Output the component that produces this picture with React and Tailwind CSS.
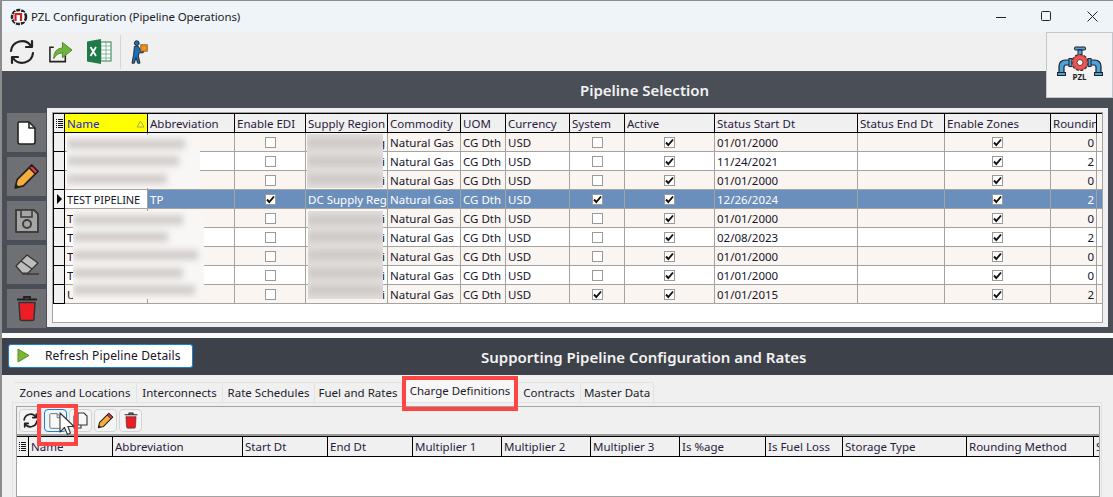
import React from "react";

const topCols = [
  ["Name", 83], ["Abbreviation", 87], ["Enable EDI", 71], ["Supply Region", 82], ["Commodity", 73], ["UOM", 45],
  ["Currency", 64], ["System", 55], ["Active", 90], ["Status Start Dt", 143], ["Status End Dt", 87], ["Enable Zones", 106], ["Roundin", 46],
];
const rows = [
  { n: "", tail: "g", sys: false, date: "01/01/2000", r: 0 },
  { n: "", tail: "i", sys: false, date: "11/24/2021", r: 2 },
  { n: "", tail: "i", sys: false, date: "01/01/2000", r: 0 },
  { n: "TEST PIPELINE", a: "TP", edi: true, reg: "DC Supply Reg", sys: true, date: "12/26/2024", r: 2, sel: true },
  { n: "T", tail: "i", sys: false, date: "01/01/2000", r: 0 },
  { n: "T", tail: "i", sys: false, date: "02/08/2023", r: 2 },
  { n: "T", tail: "i", sys: false, date: "01/01/2000", r: 0 },
  { n: "T", tail: "i", sys: false, date: "01/01/2000", r: 0 },
  { n: "U", tail: "i", sys: true, date: "01/01/2015", r: 2 },
];
const lowCols = [
  ["Name", 84], ["Abbreviation", 130], ["Start Dt", 85], ["End Dt", 85], ["Multiplier 1", 89], ["Multiplier 2", 89],
  ["Multiplier 3", 89], ["Is %age", 86], ["Is Fuel Loss", 77], ["Storage Type", 124], ["Rounding Method", 127], ["S", 8],
];

function Check({ on }) {
  return (
    <span className="flex h-[11px] w-[11px] items-center justify-center border border-[#9a9a9a] bg-white">
      {on && (
        <svg width="9" height="9" viewBox="0 0 9 9">
          <path d="M1 4.5 L3.3 7 L8 1.5" fill="none" stroke="#111" strokeWidth="1.9" />
        </svg>
      )}
    </span>
  );
}

function Cell({ w, children, className = "" }) {
  return (
    <div style={{ width: w }} className={`flex h-full shrink-0 items-center overflow-hidden whitespace-nowrap border-r border-[#a3a3a3] px-[2px] pt-px ${className}`}>
      {children}
    </div>
  );
}

function Row({ row, i }) {
  const bg = row.sel ? "bg-[#6a8fbc] text-white" : i % 2 === 0 ? "bg-[#fbf5f2] text-[#15152a]" : "bg-white text-[#15152a]";
  return (
    <div className={`flex h-[19px] border-b border-[#a3a3a3] ${bg}`}>
      <div className="flex h-[19px] w-[12px] shrink-0 items-center justify-center border-x border-b border-black bg-[#f0f0f0]">
        {row.sel && <span className="h-0 w-0 border-y-[5px] border-l-[5px] border-y-transparent border-l-black" />}
      </div>
      <Cell w={83} className={row.sel ? "bg-white text-[11px] tracking-[-0.1px] text-[#15152a]" : ""}>{row.n}</Cell>
      <Cell w={87}>{row.a}</Cell>
      <Cell w={71} className="justify-center"><Check on={row.edi} /></Cell>
      <Cell w={82} className={row.sel ? "" : "justify-end"}>{row.reg || row.tail}</Cell>
      <Cell w={73}>Natural Gas</Cell>
      <Cell w={45}>CG Dth</Cell>
      <Cell w={64}>USD</Cell>
      <Cell w={55} className="justify-center"><Check on={row.sys} /></Cell>
      <Cell w={90} className="justify-center"><Check on /></Cell>
      <Cell w={143}>{row.date}</Cell>
      <Cell w={87} />
      <Cell w={106} className="justify-center"><Check on /></Cell>
      <Cell w={46} className="justify-end">{row.r}</Cell>
    </div>
  );
}

function HeaderCell({ w, children, className = "" }) {
  return (
    <div style={{ width: w }} className={`flex h-full shrink-0 items-center overflow-hidden whitespace-nowrap border-r border-black px-[2px] pt-px text-[#2a1a3c] ${className}`}>
      {children}
    </div>
  );
}

function GridGlyph() {
  return (
    <svg width="7" height="11" viewBox="0 0 7 11">
      <path d="M0 1.5h1M2 1.5h5M0 3.5h1M2 3.5h5M0 5.5h1M2 5.5h5M0 7.5h1M2 7.5h5M0 9.5h1M2 9.5h5" stroke="#111" strokeWidth="1" />
    </svg>
  );
}

function SideBtn({ children }) {
  return <div className="flex h-[39px] w-[39px] items-center justify-center bg-[#6e7074]">{children}</div>;
}

function Sync({ size = 26, sw = 2.2 }) {
  return (
    <svg width={size} height={size} viewBox="0 0 26 26" fill="none" stroke="#222" strokeWidth={sw} strokeLinecap="round" strokeLinejoin="round">
      <path d="M2 12 A11 11 0 0 1 22 7" />
      <path d="M23 2 V8 H17" />
      <path d="M24 14 A11 11 0 0 1 4 19" />
      <path d="M3 24 V18 H9" />
    </svg>
  );
}

function PageIcon({ w = 19, h = 24, stroke = "#222", fill = "white", sw = 1.6 }) {
  return (
    <svg width={w} height={h} viewBox="0 0 19 24">
      <path d="M2 1 H12 L18 7 V21 a2 2 0 0 1 -2 2 H3 a2 2 0 0 1 -2 -2 V2 Z" fill={fill} stroke={stroke} strokeWidth={sw} strokeLinejoin="round" />
      <path d="M12 1 V7 H18" fill="none" stroke={stroke} strokeWidth={sw} strokeLinejoin="round" />
    </svg>
  );
}

function Pencil({ size = 26 }) {
  return (
    <svg width={size} height={size} viewBox="0 0 26 26">
      <path d="M2 24 L4 16 L18 2 L24 8 L10 22 Z" fill="#f6ad3c" stroke="#222" strokeWidth="1.6" strokeLinejoin="round" />
      <path d="M18 2 L24 8 L21.5 10.5 L15.5 4.5 Z" fill="#e8364b" stroke="#222" strokeWidth="1.4" strokeLinejoin="round" />
      <path d="M2 24 L3 20 L6 23 Z" fill="#222" />
    </svg>
  );
}

function Trash({ w = 22, h = 26, sw = 1.5 }) {
  return (
    <svg width={w} height={h} viewBox="0 0 22 26">
      <path d="M1 4 H21 M8 3 V1.5 H14 V3" fill="none" stroke="#222" strokeWidth="1.8" />
      <path d="M3 7 H19 L18 23 a2 2 0 0 1 -2 2 H6 a2 2 0 0 1 -2 -2 Z" fill="#ee1c25" stroke="#333" strokeWidth={sw} strokeLinejoin="round" />
    </svg>
  );
}

function PipeLogo() {
  const blue = "#4aa3dc";
  const ink = "#222";
  return (
    <svg width="46" height="34" viewBox="0 0 46 34">
      <rect x="17.5" y="1" width="11" height="3" rx="1" fill={blue} stroke={ink} strokeWidth="1" />
      <rect x="21" y="4" width="4" height="6" fill={blue} stroke={ink} strokeWidth="1" />
      <path d="M14 14 H8 a6 6 0 0 0 -6 6 V29 H7 V21 a2 2 0 0 1 2 -2 H14 Z" fill={blue} stroke={ink} strokeWidth="1.2" />
      <path d="M32 14 H38 a6 6 0 0 1 6 6 V29 H39 V21 a2 2 0 0 0 -2 -2 H32 Z" fill={blue} stroke={ink} strokeWidth="1.2" />
      <rect x="0.5" y="26.5" width="8" height="3" fill={blue} stroke={ink} strokeWidth="1" />
      <rect x="37.5" y="26.5" width="8" height="3" fill={blue} stroke={ink} strokeWidth="1" />
      <rect x="12" y="12.5" width="3" height="8" fill={blue} stroke={ink} strokeWidth="1" />
      <rect x="31" y="12.5" width="3" height="8" fill={blue} stroke={ink} strokeWidth="1" />
      <circle cx="23" cy="16.5" r="8" fill="#e04f4f" stroke="#333" strokeWidth="1.2" strokeDasharray="3 1.6" />
      <circle cx="23" cy="16.5" r="6" fill="#e85858" />
      <circle cx="23" cy="16.5" r="3" fill="#fff" stroke="#7a2b2b" strokeWidth="1" />
    </svg>
  );
}

function Blur({ className, bars, bar }) {
  return (
    <div className={`absolute overflow-hidden ${className}`}>
      <div className="flex h-full flex-col justify-around blur-[3px]">
        {bars.map((w, i) => (
          <div key={i} style={{ width: w }} className={`h-[10px] ${bar}`} />
        ))}
      </div>
    </div>
  );
}

function ToolBtn({ children, active }) {
  return (
    <div className={`flex h-[23px] w-[23px] shrink-0 items-center justify-center rounded-[4px] border ${active ? "border-[#1a7fd6] bg-[#eef5fb]" : "border-[#d4d4d4] bg-[#f4f4f4]"}`}>
      {children}
    </div>
  );
}

export default function App() {
  return (
    <div className="flex h-[497px] w-[1113px] flex-col overflow-hidden border-l-2 border-t border-[#8c8c8c] bg-[#f0f0f0] text-[11.5px] leading-none text-[#15152a] [font-family:'Noto_Sans',sans-serif]">
      {/* Title bar */}
      <div className="flex h-[31px] shrink-0 items-center bg-[#eff4f9] pl-[8px]">
        <svg width="18" height="18" viewBox="0 0 18 18">
          <circle cx="9" cy="9" r="7" fill="none" stroke="#222" strokeWidth="2.5" strokeDasharray="4 1" />
          <rect x="4" y="4" width="10" height="10" rx="1" fill="#fff" />
          <path d="M5.5 13 V6 H11 V13" fill="none" stroke="#d32027" strokeWidth="2.2" />
        </svg>
        <span className="ml-[3px] text-[11.5px] tracking-[-0.1px] text-[#1c1c24]">PZL Configuration (Pipeline Operations)</span>
        <svg className="ml-auto mr-[15px]" width="102" height="14" viewBox="0 0 102 14" fill="none" stroke="#222" strokeWidth="1">
          <path d="M0 7.5 H10" />
          <rect x="45.5" y="1.5" width="9" height="9" rx="1" />
          <path d="M91.5 1.5 L101.5 11.5 M101.5 1.5 L91.5 11.5" />
        </svg>
      </div>

      {/* Toolbar */}
      <div className="relative flex h-[39px] shrink-0 items-center bg-[#f0f0f0] pl-[7px]">
        <Sync />
        <svg className="ml-[13px]" width="25" height="24" viewBox="0 0 26 24">
          <path d="M6 7 H2 V22 H18 V14" fill="none" stroke="#222" strokeWidth="1.6" />
          <path d="M6 19 C6 11 10 8 15 8 V2 L25 10 L15 18 V13 C11 13 8 15 6 19 Z" fill="#6fb33f" stroke="#4b8a26" strokeWidth="1" />
        </svg>
        <svg className="ml-[14px]" width="25" height="25" viewBox="0 0 25 25">
          <rect x="9" y="3" width="15" height="19" fill="#fff" stroke="#2a7d4d" strokeWidth="1" />
          <path d="M14 3V22M19 3V22M9 7H24M9 11H24M9 15H24M9 19H24" stroke="#6aa585" strokeWidth="0.8" />
          <path d="M0 2.5 L14 0 V25 L0 22.5 Z" fill="#1f7a47" />
          <path d="M3.5 8 L9 17 M9 8 L3.5 17" stroke="#fff" strokeWidth="1.8" />
        </svg>
        <span className="ml-[8px] h-[34px] w-px bg-[#d5d5d5]" />
        <svg className="ml-[10px]" width="18" height="24" viewBox="0 0 20 30">
          <circle cx="6" cy="4" r="3" fill="#1e6fb5" stroke="#111" strokeWidth="1" />
          <path d="M3 8 H8 L11 13 H14 V16 H9 L8 20 L10 29 H7 L5 22 L3 29 H0 L2 18 Z" fill="#1e6fb5" stroke="#111" strokeWidth="1" />
          <rect x="11" y="6" width="8" height="8" fill="#f09022" stroke="#7a4a10" strokeWidth="1" />
        </svg>
        <div className="absolute right-0 top-0 flex h-[66px] w-[67px] flex-col items-center justify-center border border-[#c3c7cb] bg-[#f3f3f3] pb-[4px]">
          <div className="relative h-[34px] w-[46px]">
            <PipeLogo />
            <span className="absolute inset-x-0 bottom-[-1px] text-center text-[8px] font-bold text-[#222]">PZL</span>
          </div>
        </div>
      </div>

      {/* Pipeline Selection */}
      <div className="flex h-[262px] shrink-0 flex-col bg-[#4a4f57]">
        <div className="flex h-[37px] shrink-0 items-center justify-center pl-[174px] pt-[2px] text-[15px] font-semibold text-[#f2f2f2]">
          Pipeline Selection
        </div>
        <div className="flex min-h-0 flex-1">
          <div className="ml-[5px] mt-[5px] flex w-[40px] flex-col gap-[5px]">
            <SideBtn><PageIcon w={19} h={26} /></SideBtn>
            <SideBtn><Pencil size={27} /></SideBtn>
            <SideBtn>
              <svg width="26" height="26" viewBox="0 0 26 26">
                <path d="M2 2 H20 L24 6 V24 H2 Z" fill="#a5a5a5" stroke="#3e3e3e" strokeWidth="2" strokeLinejoin="round" />
                <rect x="7" y="2" width="11" height="7" fill="#a5a5a5" stroke="#3e3e3e" strokeWidth="1.6" />
                <circle cx="13" cy="16" r="4" fill="none" stroke="#3e3e3e" strokeWidth="2" />
              </svg>
            </SideBtn>
            <SideBtn>
              <svg width="26" height="24" viewBox="0 0 26 24">
                <path d="M2 13 L13 2 L24 10 L14 20 H8 Z" fill="#bdbdbd" stroke="#333" strokeWidth="1.2" strokeLinejoin="round" />
                <path d="M7 8 L18 16" stroke="#333" strokeWidth="1.2" />
                <path d="M8 21 H25" stroke="#333" strokeWidth="1.4" />
              </svg>
            </SideBtn>
            <SideBtn><Trash w={22} h={27} sw={1.5} /></SideBtn>
          </div>

          {/* Grid panel */}
          <div className="flex h-[219px] w-[1061px] shrink-0 flex-col bg-[#f0f0f0] px-[5px] pt-[4px]">
            <div className="relative h-[211px] border border-[#a3a3a3] bg-white">
              <div className="flex h-[20px] border-y border-black bg-[#f0f0f0]">
                <div className="flex h-full w-[12px] shrink-0 items-center justify-center border-x border-black"><GridGlyph /></div>
                {topCols.map(([t, w], i) => (
                  <HeaderCell key={t} w={w} className={i === 0 ? "justify-between bg-[#ffff00] !text-[#2222dd]" : ""}>
                    {t}
                    {i === 0 && (
                      <svg width="9" height="8" viewBox="0 0 9 8"><path d="M4.5 1 L8 7 H1 Z" fill="none" stroke="#a8a860" /></svg>
                    )}
                  </HeaderCell>
                ))}
              </div>
              {rows.map((r, i) => <Row key={i} row={r} i={i} />)}
              {/* Redacted (blurred) areas */}
              <Blur className="left-[14px] top-[22px] h-[53px] w-[133px] bg-[#f8f7f6]" bars={[118, 112, 100]} bar="bg-[#d2cdca]" />
              <Blur className="left-[20px] top-[98px] h-[88px] w-[131px] bg-[#f8f7f6]" bars={[110, 95, 125, 110, 122]} bar="bg-[#d2cdca]" />
              <Blur className="left-[254px] top-[21px] h-[54px] w-[76px] bg-[#e2dfdd]" bars={[76, 76, 76]} bar="bg-[#cec9c7]" />
              <Blur className="left-[255px] top-[98px] h-[88px] w-[75px] bg-[#e2dfdd]" bars={[75, 75, 75, 75, 75]} bar="bg-[#cec9c7]" />
            </div>
          </div>
        </div>
      </div>

      <div className="h-[5px] shrink-0 bg-[#fafafa]" />

      {/* Lower header */}
      <div className="flex h-[37px] shrink-0 items-center bg-[#3d4149]">
        <div className="-mt-[2px] ml-[6px] flex h-[24px] w-[185px] items-center rounded-[3px] border border-[#1a7fd6] bg-white pl-[8px]">
          <svg width="13" height="15" viewBox="0 0 13 15"><path d="M1 1 L12 7.5 L1 14 Z" fill="#7ab833" stroke="#5a8f26" strokeWidth="1" /></svg>
          <span className="ml-[15px] text-[12px] tracking-[0.12px] text-[#15152a]">Refresh Pipeline Details</span>
        </div>
        <div className="ml-[288px] pt-[2px] text-[15px] font-semibold text-[#f2f2f2]">Supporting Pipeline Configuration and Rates</div>
      </div>

      {/* Lower panel */}
      <div className="relative mx-[5px] flex min-h-0 w-[1102px] flex-1 flex-col bg-[#f0f0f0] pl-[5px] pr-[7px] pt-[7px]">
        <div className="flex h-[20px] shrink-0 items-stretch pl-[2px] text-[#1c1c2a]">
          {[
            ["Zones and Locations", 123], ["Interconnects", 86], ["Rate Schedules", 92], ["Fuel and Rates", 87],
            ["Charge Definitions", 116], ["Contracts", 63], ["Master Data", 73],
          ].map(([t, w]) => (
            t === "Charge Definitions" ? (
              <div key={t} style={{ width: w }} className="-mt-[3px] flex h-[23px] shrink-0 items-center justify-center bg-[#f7f7f7]">{t}</div>
            ) : (
              <div key={t} style={{ width: w }} className="flex shrink-0 items-center justify-center border-r border-t border-[#e3e3e3]">{t}</div>
            )
          ))}
        </div>
        <div className="flex min-h-0 flex-1 flex-col border-x border-t border-[#e3e3e3] pl-[3px] pr-[1px] pt-[3px]">
          <div className="flex min-h-0 flex-1 flex-col overflow-hidden border-x border-t border-[#a3a3a3]">
            <div className="flex h-[27px] shrink-0 items-center gap-[2px] pl-[2px]">
              <ToolBtn><Sync size={15} sw={3} /></ToolBtn>
              <ToolBtn active><PageIcon w={13} h={16} stroke="#555" fill="#f8f8f8" sw={1.2} /></ToolBtn>
              <ToolBtn>
                <svg width="15" height="17" viewBox="0 0 15 17" fill="#f8f8f8" stroke="#333" strokeWidth="1.1">
                  <path d="M1 4 H8 V16 H1 Z" />
                  <path d="M5 1 H11 L14 4 V13 H5 Z" />
                </svg>
              </ToolBtn>
              <ToolBtn><Pencil size={17} /></ToolBtn>
              <ToolBtn><Trash w={14} h={17} sw={1} /></ToolBtn>
            </div>
            <div className="h-[2px] shrink-0 bg-[#9a9a9a]" />
            <div className="flex h-[21px] shrink-0 border-y border-black bg-[#f0f0f0]">
              <div className="flex h-full w-[12px] shrink-0 items-center justify-center border-r border-black"><GridGlyph /></div>
              {lowCols.map(([t, w]) => <HeaderCell key={t} w={w}>{t}</HeaderCell>)}
            </div>
            <div className="flex-1 border-b border-[#a3a3a3] bg-white" />
          </div>
        </div>

        {/* Red callouts and cursor */}
        <div className="absolute left-[395px] top-[1px] h-[35px] w-[116px] border-[4px] border-[#ff4444]" />
        <div className="absolute left-[30px] top-[29px] h-[42px] w-[41px] border-[4px] border-[#ff4444]" />
        <svg className="absolute left-[52px] top-[37px]" width="16" height="24" viewBox="0 0 16 24">
          <path d="M1 1 V20 L5.5 15.5 L8.5 22.5 L11.5 21 L8.8 14.5 H15 Z" fill="#fff" stroke="#333" strokeWidth="1.1" strokeLinejoin="round" />
        </svg>
      </div>
    </div>
  );
}
